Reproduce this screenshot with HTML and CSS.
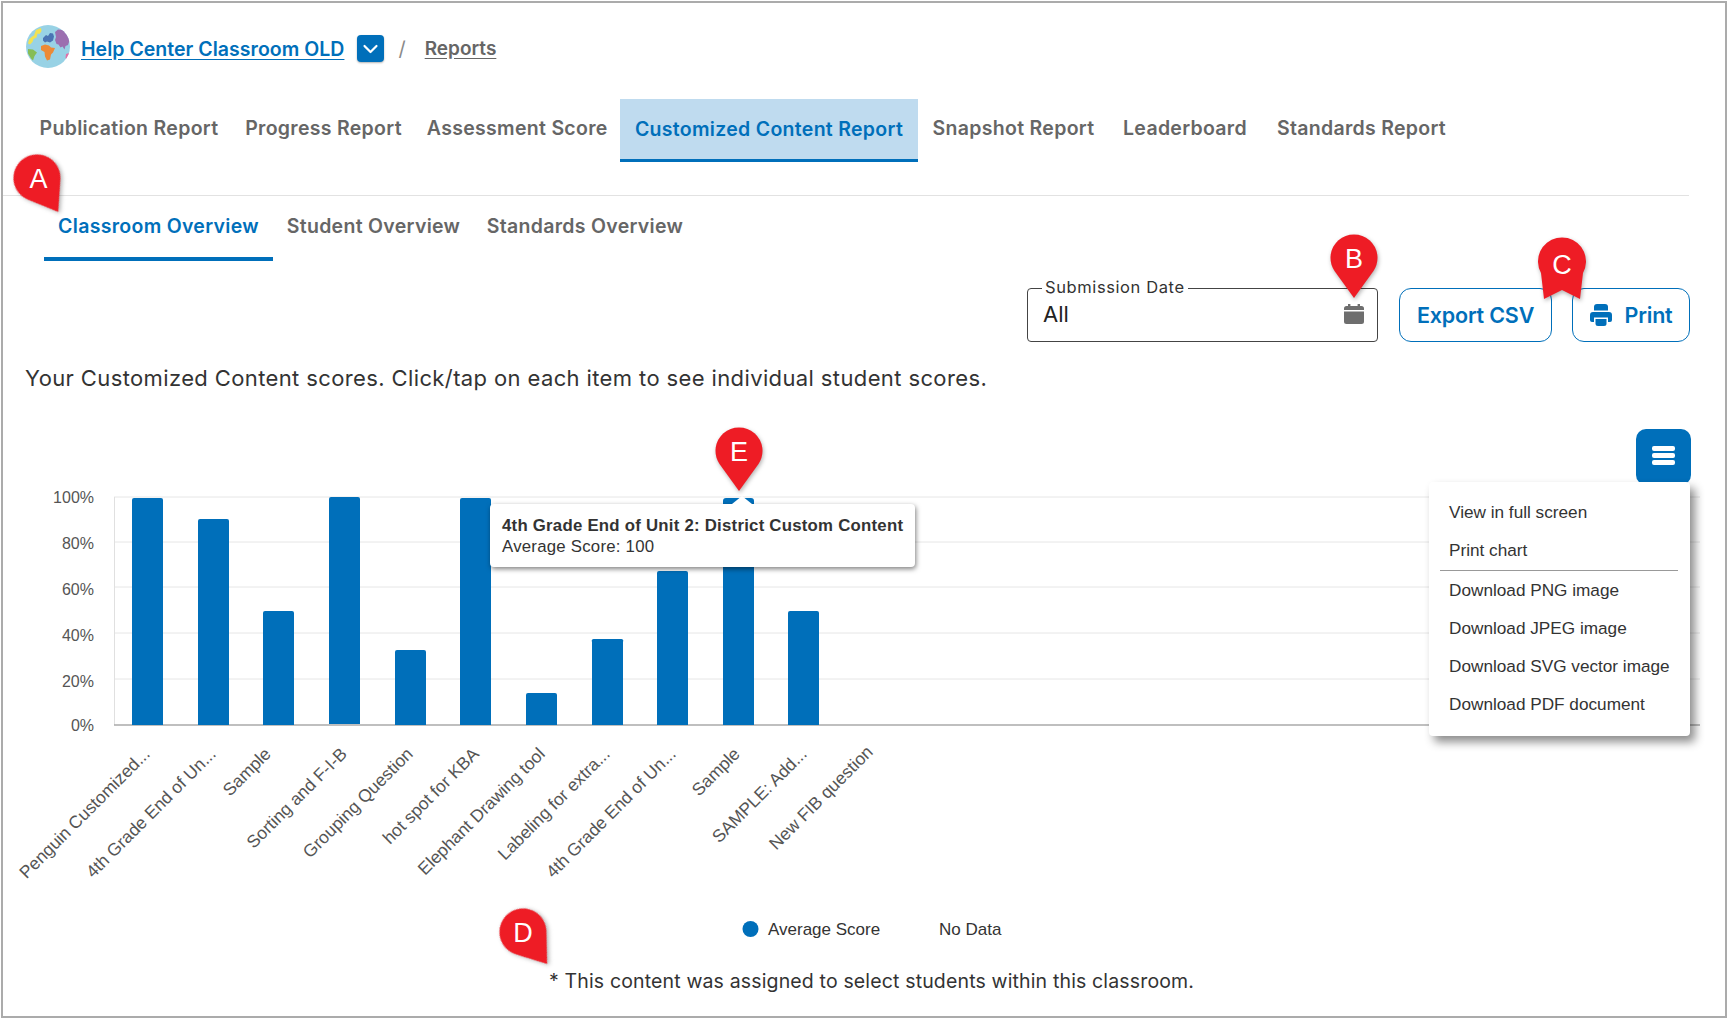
FILE: index.html
```html
<!DOCTYPE html>
<html lang="en">
<head>
<meta charset="utf-8">
<title>Customized Content Report</title>
<link rel="stylesheet" href="styles.css">
</head>
<body>
<main class="page">
  <nav class="crumbs">
    <svg class="globe" viewBox="0 0 44 43" aria-hidden="true">
      <defs><clipPath id="globe-clip"><ellipse cx="22" cy="21.5" rx="22" ry="21.5"/></clipPath></defs>
      <ellipse cx="22" cy="21.5" rx="22" ry="21.5" fill="#98d2e5"/>
      <g clip-path="url(#globe-clip)">
        <path d="M10 5l5-2 .5 3-2 3-2-.5-1 4-3 1.500-1 3-2.500 2.500-2-1 1-4 3-3 2-1z" fill="#f2e252"/>
        <path d="M2 24l5 .5 4 3-2.500 3.500-1.500 4.500-2-2-3-5z" fill="#86bd58"/>
        <path d="M17 13l3-3 2 1 2-3 3 .5 1 3-1 4-3 2-3-1-2 1-2-2z" fill="#4a74b4"/>
        <path d="M29 7l3-2.500 5 .5 5 3 2 6-2 6-2.500 1-1 3.500-2-3-2 1-2-3-2-.5-1.500-4 1-3z" fill="#9c6fb0"/>
        <path d="M15 21l4-1.500 4 1 2 2 4 .5-2 4.500-2 2-1 5-3 1-2-4-.5-4.500-3.500-2z" fill="#ec8a36"/>
        <path d="M40 29l3-1 1 4-3 3-1.500-2z" fill="#e56ea6"/>
      </g>
    </svg>
    <a class="crumb-class" href="#">Help Center Classroom OLD</a>
    <button class="crumb-toggle" type="button" aria-label="Switch classroom">
      <svg viewBox="0 0 27 27" aria-hidden="true"><path d="M7.5 11l6 6 6-6" fill="none" stroke="#fff" stroke-width="2.2" stroke-linecap="round" stroke-linejoin="round"/></svg>
    </button>
    <span class="crumb-sep">/</span>
    <a class="crumb-page" href="#">Reports</a>
  </nav>

  <div class="tabs">
    <a class="tab" href="#">Publication Report</a>
    <a class="tab" href="#">Progress Report</a>
    <a class="tab" href="#">Assessment Score</a>
    <a class="tab tab-active" href="#">Customized Content Report</a>
    <a class="tab" href="#">Snapshot Report</a>
    <a class="tab" href="#">Leaderboard</a>
    <a class="tab" href="#">Standards Report</a>
  </div>

  <div class="subtabs">
    <a class="subtab subtab-active" href="#">Classroom Overview</a>
    <a class="subtab" href="#">Student Overview</a>
    <a class="subtab" href="#">Standards Overview</a>
  </div>

  <div class="toolbar">
    <div class="date-field">
      <span class="date-label">Submission Date</span>
      <span class="date-value">All</span>
      <svg class="date-icon" viewBox="0 0 20 20" aria-hidden="true">
        <path d="M4 0h2.4v2H13.600V0H16v2h1.500A2.500 2.500 0 0 1 20 4.500V6H0V4.500A2.500 2.500 0 0 1 2.500 2H4zM0 7.500h20V17.500A2.500 2.500 0 0 1 17.500 20h-15A2.500 2.500 0 0 1 0 17.500z" fill="#6e6e6e"/>
      </svg>
    </div>
    <button class="btn btn-export" type="button">Export CSV</button>
    <button class="btn btn-print" type="button">
      <svg class="print-icon" viewBox="0 0 22 22" aria-hidden="true">
        <path d="M4 6.500V3a3 3 0 0 1 3-3h8a3 3 0 0 1 3 3v3.500z" fill="#006fba"/>
        <path d="M3 8h16a3 3 0 0 1 3 3v5a2 2 0 0 1-2 2h-2v-4.500H4V18H2a2 2 0 0 1-2-2v-5a3 3 0 0 1 3-3z" fill="#006fba"/>
        <path d="M5.500 15h11v4.500A2.500 2.500 0 0 1 14 22H8a2.500 2.500 0 0 1-2.500-2.500z" fill="#006fba"/>
      </svg>
      Print
    </button>
  </div>

  <p class="intro">Your Customized Content scores. Click/tap on each item to see individual student scores.</p>

  <section class="chart">
    <svg class="chart-svg" viewBox="3 392 1721 563" role="img" aria-label="Average score by content item">
      <g class="grid">
        <line x1="114" x2="1700" y1="497" y2="497"/>
        <line x1="114" x2="1700" y1="542" y2="542"/>
        <line x1="114" x2="1700" y1="587" y2="587"/>
        <line x1="114" x2="1700" y1="633" y2="633"/>
        <line x1="114" x2="1700" y1="679" y2="679"/>
      </g>
      <line class="axis-y" x1="114.500" x2="114.500" y1="497" y2="725"/>
      <line class="axis-x" x1="114" x2="1700" y1="725" y2="725"/>
      <g class="y-labels">
        <text x="94" y="503">100%</text>
        <text x="94" y="549">80%</text>
        <text x="94" y="595">60%</text>
        <text x="94" y="641">40%</text>
        <text x="94" y="687">20%</text>
        <text x="94" y="731">0%</text>
      </g>
      <g class="bars">
        <path d="M132 725V500a2 2 0 0 1 2-2h27a2 2 0 0 1 2 2V725z"/>
        <path d="M198 725V521a2 2 0 0 1 2-2h27a2 2 0 0 1 2 2V725z"/>
        <path d="M263 725V613a2 2 0 0 1 2-2h27a2 2 0 0 1 2 2V725z"/>
        <path d="M329 724V499a2 2 0 0 1 2-2h27a2 2 0 0 1 2 2V724z"/>
        <path d="M395 725V652a2 2 0 0 1 2-2h27a2 2 0 0 1 2 2V725z"/>
        <path d="M460 725V500a2 2 0 0 1 2-2h27a2 2 0 0 1 2 2V725z"/>
        <path d="M526 725V695a2 2 0 0 1 2-2h27a2 2 0 0 1 2 2V725z"/>
        <path d="M592 725V642a2 2 0 0 1 2-3h27a2 2 0 0 1 2 3V725z"/>
        <path d="M657 725V573a2 2 0 0 1 2-2h27a2 2 0 0 1 2 2V725z"/>
        <path d="M723 725V501a3 3 0 0 1 3-3h25a3 3 0 0 1 3 3V725z"/>
        <path d="M788 725V613a2 2 0 0 1 2-2h27a2 2 0 0 1 2 2V725z"/>
      </g>
      <g class="x-labels">
        <text transform="translate(151 755) rotate(-45)">Penguin Customized...</text>
        <text transform="translate(217 755) rotate(-45)">4th Grade End of Un...</text>
        <text transform="translate(272 755) rotate(-45)">Sample</text>
        <text transform="translate(348 755) rotate(-45)">Sorting and F-I-B</text>
        <text transform="translate(414 755) rotate(-45)">Grouping Question</text>
        <text transform="translate(480 755) rotate(-45)">hot spot for KBA</text>
        <text transform="translate(546 755) rotate(-45)">Elephant Drawing tool</text>
        <text transform="translate(611 755) rotate(-45)">Labeling for extra...</text>
        <text transform="translate(677 755) rotate(-45)">4th Grade End of Un...</text>
        <text transform="translate(741 755) rotate(-45)">Sample</text>
        <text transform="translate(808 755) rotate(-45)">SAMPLE: Add...</text>
        <text transform="translate(874 753) rotate(-45)">New FIB question</text>
      </g>
      <circle class="legend-dot" cx="750.500" cy="929" r="8"/>
      <text class="legend-text" x="768" y="935">Average Score</text>
      <text class="legend-text" x="939" y="935">No Data</text>
    </svg>

    <div class="tooltip">
      <strong class="tooltip-title">4th Grade End of Unit 2: District Custom Content</strong>
      <span class="tooltip-value">Average Score: 100</span>
    </div>

    <button class="menu-btn" type="button" aria-label="Chart context menu"><span></span><span></span><span></span></button>
    <ul class="menu">
      <li>View in full screen</li>
      <li>Print chart</li>
      <li class="menu-rule"></li>
      <li>Download PNG image</li>
      <li>Download JPEG image</li>
      <li>Download SVG vector image</li>
      <li>Download PDF document</li>
    </ul>
  </section>

  <p class="footnote">* This content was assigned to select students within this classroom.</p>

  <div class="pin pin-a"><svg viewBox="-25 -25 50 67" aria-hidden="true"><path d="M0 40L-19.500 13A23.500 23.500 0 1 1 19.500 13Z"/></svg><span>A</span></div>
  <div class="pin pin-b"><svg viewBox="-25 -25 50 67" aria-hidden="true"><path d="M0 40L-19.500 13A23.500 23.500 0 1 1 19.500 13Z"/></svg><span>B</span></div>
  <div class="pin pin-c"><svg viewBox="-25 -25 50 67" aria-hidden="true"><path d="M-18 37L0 28 18 37 21 11A24 24 0 1 0 -24 0 24 24 0 0 0 -21 11Z"/></svg><span>C</span></div>
  <div class="pin pin-d"><svg viewBox="-25 -25 50 67" aria-hidden="true"><path d="M0 40L-19.500 13A23.500 23.500 0 1 1 19.500 13Z"/></svg><span>D</span></div>
  <div class="pin pin-e"><svg viewBox="-25 -25 50 67" aria-hidden="true"><path d="M0 40L-19.500 13A23.500 23.500 0 1 1 19.500 13Z"/></svg><span>E</span></div>
</main>
</body>
</html>
```
FILE: styles.css
```css
* { box-sizing: border-box; }

html, body { margin: 0; padding: 0; background: #fff; }

body {
  font-family: Inter, "Open Sans", "Liberation Sans", sans-serif;
  color: #333;
}

.page {
  position: relative;
  width: 1726px;
  height: 1017px;
  margin: 1px;
  border: 2px solid #ababab;
  overflow: hidden;
  background: #fff;
}

a { text-decoration: none; }

/* breadcrumb */
.crumbs {
  display: flex;
  align-items: center;
  height: 43px;
  margin-top: 22px;
  padding-left: 23px;
}

.globe { width: 44px; height: 43px; flex: none; }

.crumb-class {
  margin: 4px 0 0 11px;
  font-size: 19.500px;
  font-weight: 600;
  letter-spacing: .03px;
  color: #006fba;
  text-decoration: underline;
  text-underline-offset: 3px;
}

.crumb-toggle {
  width: 27px;
  height: 27px;
  margin: 3px 0 0 13px;
  padding: 0;
  border: 0;
  border-radius: 4px;
  background: #006fba;
  box-shadow: 0 1px 2px rgba(0, 0, 0, .3);
}

.crumb-toggle svg { display: block; width: 27px; height: 27px; }

.crumb-sep {
  margin: 4px 0 0 14px;
  font-size: 20px;
  color: #8a8a8a;
}

.crumb-page {
  margin: 4px 0 0 19px;
  font-size: 19px;
  font-weight: 600;
  color: #666;
  text-decoration: underline;
  text-underline-offset: 3px;
}

/* report tabs */
.tabs {
  display: grid;
  grid-template-columns: 207px 182px 205.500px 298px 191px 152px 201px;
  height: 63px;
  margin-top: 31px;
  padding-left: 22.500px;
}

.tab {
  display: flex;
  align-items: center;
  justify-content: center;
  padding-bottom: 5px;
  font-size: 19.500px;
  font-weight: 600;
  letter-spacing: .3px;
  white-space: nowrap;
  color: #666;
}

.tab-active {
  padding-bottom: 0;
  border-bottom: 3px solid #006fba;
  background: #bfdbef;
  color: #006fba;
}

/* sub tabs */
.subtabs {
  display: grid;
  grid-template-columns: 229px 201px 222px;
  height: 66px;
  margin: 33px 36px 0 0;
  padding-left: 41px;
  border-top: 1px solid #e2e2e2;
}

.subtab {
  display: flex;
  align-items: center;
  justify-content: center;
  padding-bottom: 6px;
  font-size: 19.500px;
  font-weight: 600;
  letter-spacing: .3px;
  white-space: nowrap;
  color: #666;
}

.subtab-active {
  padding-bottom: 2px;
  border-bottom: 4px solid #006fba;
  color: #006fba;
}

/* toolbar */
.toolbar {
  display: flex;
  justify-content: flex-end;
  gap: 20px;
  height: 54px;
  margin-top: 27px;
  padding-right: 35px;
}

.date-field {
  position: relative;
  display: flex;
  align-items: center;
  justify-content: space-between;
  width: 351px;
  margin-right: 1px;
  padding: 0 13px 2px 15px;
  border: 1px solid #444;
  border-radius: 4px;
}

.date-label {
  position: absolute;
  top: -11px;
  left: 14px;
  padding: 0 3px;
  background: #fff;
  font-size: 16.500px;
  letter-spacing: .6px;
  line-height: 18px;
  color: #333;
}

.date-value { font-size: 22px; color: #222; }

.date-icon { width: 20px; height: 20px; }

.btn {
  display: flex;
  align-items: center;
  justify-content: center;
  height: 54px;
  padding: 0;
  border: 1.500px solid #006fba;
  border-radius: 12px;
  background: #fff;
  font-family: inherit;
  font-size: 21.500px;
  font-weight: 600;
  letter-spacing: -0.200px;
  color: #006fba;
}

.btn-export { width: 153px; }

.btn-print { width: 118px; gap: 13px; }

.print-icon { width: 22px; height: 22px; flex: none; }

/* intro */
.intro {
  margin: 22px 0 0;
  padding-left: 22px;
  font-size: 22px;
  letter-spacing: .38px;
  line-height: 28px;
  color: #333;
}

/* chart */
.chart {
  position: relative;
  height: 563px;
}

.chart-svg { display: block; width: 1721px; height: 563px; }

.grid line { stroke: #e6e6e6; stroke-width: 1; }

.axis-y { stroke: #e0e0e0; stroke-width: 1; }

.axis-x { stroke: #aaa; stroke-width: 1.500; }

.y-labels text {
  font-family: "Liberation Sans", Arial, sans-serif;
  font-size: 16px;
  fill: #555;
  text-anchor: end;
}

.bars path { fill: #006fba; }

.x-labels text {
  font-family: "Liberation Sans", Arial, sans-serif;
  font-size: 17.500px;
  fill: #555;
  text-anchor: end;
}

.legend-dot { fill: #006fba; }

.legend-text {
  font-family: "Liberation Sans", Arial, sans-serif;
  font-size: 17px;
  fill: #333;
}

.tooltip {
  position: absolute;
  top: 112px;
  left: 487px;
  width: 425px;
  height: 63px;
  padding: 12px 12px;
  border-radius: 4px;
  background: #fff;
  box-shadow: 1px 2px 5px rgba(0, 0, 0, .5);
  font-family: "Liberation Sans", Arial, sans-serif;
  font-size: 16.800px;
  line-height: 20.500px;
  color: #333;
  letter-spacing: .24px;
  white-space: nowrap;
}

.tooltip::before {
  content: "";
  position: absolute;
  top: -8px;
  left: 242px;
  border: 10px solid transparent;
  border-top: 0;
  border-bottom: 8px solid #fff;
}

.tooltip-title { display: block; font-weight: 700; }

.tooltip-value { display: block; }

.menu-btn {
  position: absolute;
  top: 37px;
  left: 1633px;
  display: flex;
  flex-direction: column;
  align-items: center;
  justify-content: center;
  gap: 2.500px;
  width: 55px;
  height: 56px;
  padding: 0 0 3px;
  border: 0;
  border-radius: 10px;
  background: #006fba;
}

.menu-btn span {
  display: block;
  width: 23px;
  height: 4.500px;
  border-radius: 2px;
  background: #fff;
}

.menu {
  position: absolute;
  top: 90px;
  left: 1426px;
  width: 261px;
  height: 254px;
  margin: 0;
  padding: 11px 0 0 20px;
  list-style: none;
  border-radius: 4px;
  background: #fff;
  box-shadow: 5px 6px 10px rgba(0, 0, 0, .45);
  font-family: "Liberation Sans", Arial, sans-serif;
  font-size: 17.200px;
  line-height: 38.300px;
  color: #333;
}

.menu-rule {
  height: 1px;
  margin: 0 12px 0 -9px;
  background: #999;
}

.footnote {
  position: relative;
  margin: 12px 0 0;
  padding-left: 546px;
  font-size: 19.500px;
  letter-spacing: .15px;
  line-height: 28px;
  color: #333;
}

/* annotation pins: centred on the head of the marker */
.pin {
  position: absolute;
  width: 50px;
  height: 67px;
  color: #fff;
  font-family: "Liberation Sans", Arial, sans-serif;
  font-size: 27px;
  line-height: 53px;
  text-align: center;
}

.pin svg {
  position: absolute;
  inset: 0;
  width: 50px;
  height: 67px;
  overflow: visible;
  filter: drop-shadow(1px 2px 2px rgba(0, 0, 0, .3));
}

.pin svg path { fill: #ee1c25; }

.pin span { position: relative; display: block; }

.pin-a { top: 150px; left: 9px; }
.pin-a svg { transform: rotate(-32deg); transform-origin: 25px 25px; }
.pin-a span { padding-left: 3px; }

.pin-b { top: 230px; left: 1326px; }

.pin-c { top: 234px; left: 1534px; }
.pin-c span { padding-top: 2px; }

.pin-d { top: 904px; left: 495px; }
.pin-d svg { transform: rotate(-37deg); transform-origin: 25px 25px; }

.pin-e { top: 423px; left: 711px; }
```
